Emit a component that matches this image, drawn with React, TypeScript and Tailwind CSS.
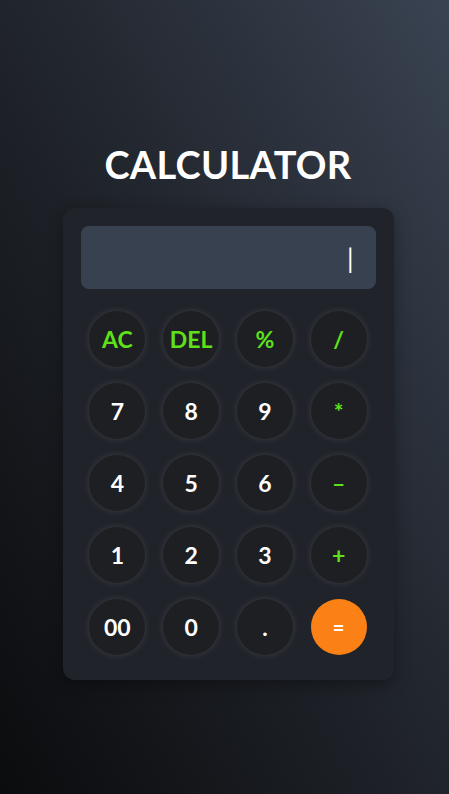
import React from "react";

const keys: { label: string; kind: "op" | "num" | "eq" }[] = [
  { label: "AC", kind: "op" },
  { label: "DEL", kind: "op" },
  { label: "%", kind: "op" },
  { label: "/", kind: "op" },
  { label: "7", kind: "num" },
  { label: "8", kind: "num" },
  { label: "9", kind: "num" },
  { label: "*", kind: "op" },
  { label: "4", kind: "num" },
  { label: "5", kind: "num" },
  { label: "6", kind: "num" },
  { label: "–", kind: "op" },
  { label: "1", kind: "num" },
  { label: "2", kind: "num" },
  { label: "3", kind: "num" },
  { label: "+", kind: "op" },
  { label: "00", kind: "num" },
  { label: "0", kind: "num" },
  { label: ".", kind: "num" },
  { label: "=", kind: "eq" },
];

export default function App() {
  return (
    <div
      className="w-[449px] h-[794px] pl-[7px] flex flex-col items-center bg-gradient-to-bl from-[#3a4352] via-[#20242b] to-[#0b0c0e]"
      style={{ fontFamily: "Lato, 'Noto Sans', sans-serif" }}
    >
      <h1 className="mt-[142px] h-[44px] text-[38px] leading-[44px] font-bold text-white tracking-[0.3px]">
        CALCULATOR
      </h1>
      <div className="mt-[22px] w-[331px] rounded-[12px] bg-[#202329] px-[18px] pt-[18px] pb-[25px] shadow-[0_4px_16px_rgba(0,0,0,0.35)]">
        <div className="h-[63px] rounded-[8px] bg-[#384150] flex items-center justify-end pr-[22px]">
          <span className="text-white text-[26px] leading-none font-normal">|</span>
        </div>
        <div className="mt-[22px] grid grid-cols-4 gap-y-4 justify-items-center">
          {keys.map((k) => (
            <button
              key={k.label}
              className={
                k.kind === "eq"
                  ? "w-[56px] h-[56px] rounded-full bg-[#fb8117] text-white text-[20px] font-bold flex items-center justify-center"
                  : k.kind === "op"
                  ? "w-[56px] h-[56px] rounded-full bg-[#1d1f23] text-[#5fe11a] text-[23px] font-bold flex items-center justify-center shadow-[0_0_7px_rgba(255,255,255,0.13)]"
                  : "w-[56px] h-[56px] rounded-full bg-[#1d1f23] text-white text-[23px] font-bold flex items-center justify-center shadow-[0_0_7px_rgba(255,255,255,0.13)]"
              }
            >
              {k.label}
            </button>
          ))}
        </div>
      </div>
    </div>
  );
}
